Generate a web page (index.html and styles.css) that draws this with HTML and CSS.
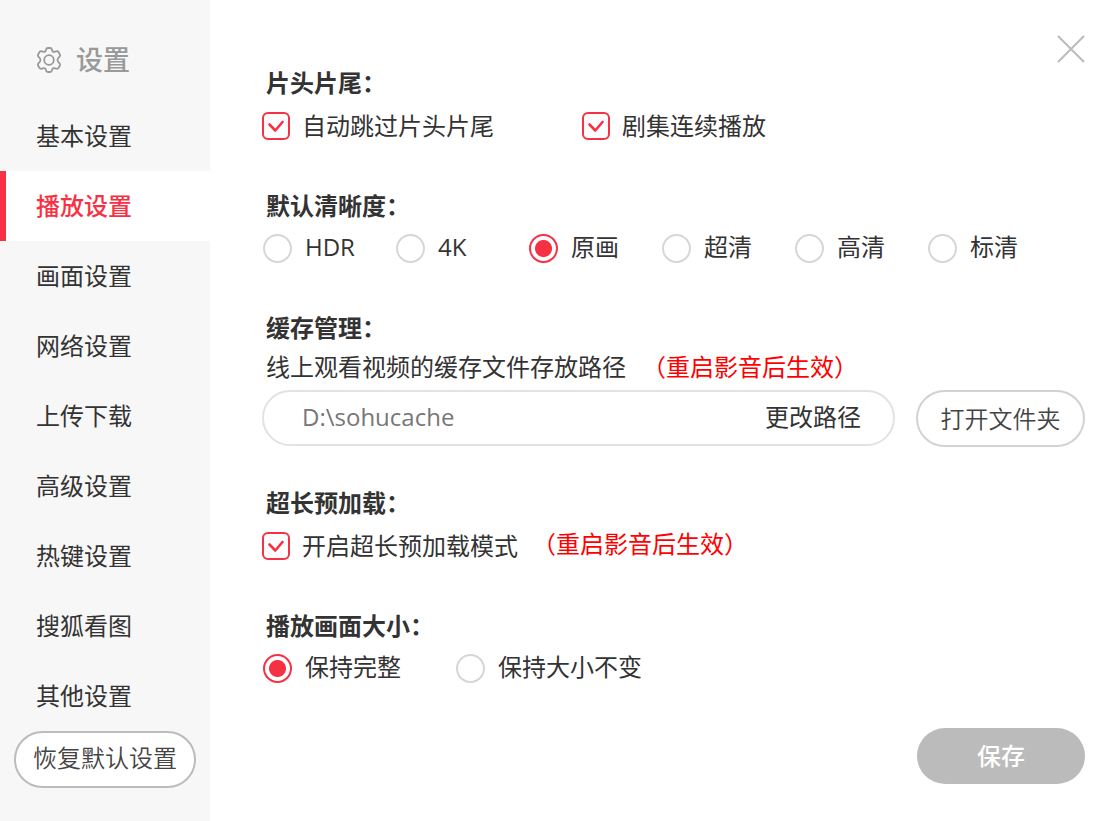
FILE: index.html
```html
<!DOCTYPE html>
<html lang="zh-CN">
<head>
    <meta charset="UTF-8">
    <meta name="viewport" content="width=device-width, initial-scale=1.0">
    <title>设置</title>
    <link rel="stylesheet" href="styles.css">
</head>
<body>
    <aside class="sidebar">
        <h1 class="sidebar-title">
            <svg class="gear" viewBox="0 0 26 26" aria-hidden="true">
                <path d="M10 2.6 Q10.3 1 12 1 H14 Q15.7 1 16 2.6 L16.3 3.9 Q16.8 5.1 18.2 4.8 L20.2 4.3 Q21.8 3.9 22.6 5.2 L23.8 7.2 Q24.6 8.5 23.6 9.6 L22.1 11.2 Q20.8 13 22.1 14.8 L23.6 16.4 Q24.6 17.5 23.8 18.8 L22.6 20.8 Q21.8 22.1 20.2 21.7 L18.2 21.2 Q16.8 20.9 16.3 22.1 L16 23.4 Q15.7 25 14 25 H12 Q10.3 25 10 23.4 L9.7 22.1 Q9.2 20.9 7.8 21.2 L5.8 21.7 Q4.2 22.1 3.4 20.8 L2.2 18.8 Q1.4 17.5 2.4 16.4 L3.9 14.8 Q5.2 13 3.9 11.2 L2.4 9.6 Q1.4 8.5 2.2 7.2 L3.4 5.2 Q4.2 3.9 5.8 4.3 L7.8 4.8 Q9.2 5.1 9.7 3.9 Z"/>
                <circle cx="13" cy="13" r="4.8"/>
            </svg>
            设置
        </h1>
        <nav class="menu">
            <a href="#">基本设置</a>
            <a href="#" class="active" aria-current="page">播放设置</a>
            <a href="#">画面设置</a>
            <a href="#">网络设置</a>
            <a href="#">上传下载</a>
            <a href="#">高级设置</a>
            <a href="#">热键设置</a>
            <a href="#">搜狐看图</a>
            <a href="#">其他设置</a>
        </nav>
        <button type="button" class="btn btn-reset">恢复默认设置</button>
    </aside>

    <main class="content">
        <div class="topbar">
            <button type="button" class="close" aria-label="关闭">
                <svg viewBox="0 0 28 28" aria-hidden="true">
                    <path d="M1 1 L27 27 M27 1 L1 27"/>
                </svg>
            </button>
        </div>

        <form class="settings">
            <section>
                <h2>片头片尾：</h2>
                <div class="options options-check">
                    <label><input type="checkbox" name="skip" checked>自动跳过片头片尾</label>
                    <label><input type="checkbox" name="continuous" checked>剧集连续播放</label>
                </div>
            </section>

            <section>
                <h2>默认清晰度：</h2>
                <div class="options options-radio options-quality">
                    <label><input type="radio" name="quality"><span>HDR</span></label>
                    <label><input type="radio" name="quality"><span>4K</span></label>
                    <label><input type="radio" name="quality" checked><span>原画</span></label>
                    <label><input type="radio" name="quality"><span>超清</span></label>
                    <label><input type="radio" name="quality"><span>高清</span></label>
                    <label><input type="radio" name="quality"><span>标清</span></label>
                </div>
            </section>

            <section>
                <h2>缓存管理：</h2>
                <p class="desc"><label for="cachePath">线上观看视频的缓存文件存放路径</label><span class="note">（重启影音后生效）</span></p>
                <div class="path-row">
                    <div class="path-box">
                        <input type="text" id="cachePath" value="D:\sohucache">
                        <button type="button" class="change">更改路径</button>
                    </div>
                    <button type="button" class="btn btn-open">打开文件夹</button>
                </div>
            </section>

            <section>
                <h2>超长预加载：</h2>
                <div class="options">
                    <label><input type="checkbox" name="preload" checked>开启超长预加载模式</label>
                    <span class="note">（重启影音后生效）</span>
                </div>
            </section>

            <section>
                <h2>播放画面大小：</h2>
                <div class="options options-radio options-size">
                    <label><input type="radio" name="size" checked><span>保持完整</span></label>
                    <label><input type="radio" name="size"><span>保持大小不变</span></label>
                </div>
            </section>

            <button type="submit" class="btn btn-save">保存</button>
        </form>
    </main>
</body>
</html>
```
FILE: styles.css
```css
* {
    box-sizing: border-box;
}
body {
    display: flex;
    min-height: 100vh;
    margin: 0;
    font-family: "Open Sans", "Noto Sans CJK SC", sans-serif;
    font-size: 24px;
    line-height: 36px;
    color: #333;
    background: #fff;
}
h1, h2, p {
    margin: 0;
}
button, input {
    margin: 0;
    font: inherit;
    color: inherit;
}
button {
    padding: 0;
    cursor: pointer;
}

/* sidebar */
.sidebar {
    flex: none;
    width: 210px;
    background: #f7f7f7;
}
.sidebar-title {
    display: flex;
    align-items: center;
    gap: 14px;
    height: 101px;
    padding: 19px 0 0 36px;
    font-size: 27px;
    font-weight: 500;
    color: #999;
}
.gear {
    width: 26px;
    height: 26px;
    fill: none;
    stroke: #999;
    stroke-width: 1.8;
}
.menu a {
    display: block;
    padding: 17px 0 17px 30px;
    border-left: 6px solid transparent;
    color: #333;
    text-decoration: none;
}
.menu .active {
    border-left-color: #f73144;
    background: #fff;
    color: #f73144;
    font-weight: 500;
}

.btn {
    height: 57px;
    border: 2px solid #d2d2d2;
    border-radius: 29px;
    background: #fff;
    color: #444;
}
.btn-reset {
    display: block;
    width: 182px;
    margin: 0 auto;
    padding-bottom: 4px;
    border-color: #bcbcbc;
    font-weight: 350;
}
.btn-open {
    flex: none;
    width: 169px;
    font-weight: 350;
}
.btn-save {
    align-self: flex-end;
    width: 168px;
    height: 56px;
    border: none;
    background: #bbb;
    color: #fff;
    font-weight: 500;
}

.content {
    flex: 1;
    padding: 35px 34px 37px 52px;
}
.topbar {
    display: flex;
    justify-content: flex-end;
    height: 30px;
}
.close {
    width: 28px;
    height: 28px;
    border: none;
    background: none;
}
.close svg {
    display: block;
    fill: none;
    stroke: #bbb;
    stroke-width: 2;
}

.settings {
    display: flex;
    flex-direction: column;
}
.settings section {
    margin-bottom: 37px;
}
.settings section:last-of-type {
    margin-bottom: 35px;
}
h2 {
    padding-left: 4px;
    font-size: 24px;
    font-weight: bold;
}
.options {
    display: flex;
    align-items: center;
    height: 50px;
}
.options label {
    display: flex;
    align-items: center;
    gap: 12px;
}
.options-check,
.options-radio {
    display: grid;
}
.options-check {
    grid-template-columns: 320px auto;
}
.options-radio {
    height: 49px;
}
.options-radio label {
    gap: 13px;
}
.options-radio span {
    padding-bottom: 3px;
}
.options-quality {
    grid-template-columns: repeat(6, 133px);
}
.options-size {
    grid-template-columns: 193px auto;
}

input[type="checkbox"],
input[type="radio"] {
    appearance: none;
    flex: none;
    width: 28px;
    height: 28px;
    border: 2px solid #f73144;
    border-radius: 6px;
}
input[type="checkbox"]:checked {
    background: url("data:image/svg+xml,%3Csvg xmlns='http://www.w3.org/2000/svg' viewBox='0 0 24 24' fill='none' stroke='%23f73144' stroke-width='2.6' stroke-linecap='round' stroke-linejoin='round'%3E%3Cpath d='M5.5 10.5L11.3 16.5L18.5 8'/%3E%3C/svg%3E") center / 24px 24px no-repeat;
}
input[type="radio"] {
    width: 29px;
    height: 29px;
    margin-left: 1px;
    border-color: #d6d6d6;
    border-radius: 50%;
}
input[type="radio"]:checked {
    border-color: #f73144;
    background: radial-gradient(circle, #f73144 8px, #fff 9px);
}

.note {
    color: #f00;
}
.options .note {
    margin-left: 14px;
    padding-bottom: 4px;
}
.desc {
    padding-left: 4px;
    line-height: 42px;
}
.desc .note {
    margin-left: 16px;
}
.path-row {
    display: flex;
    gap: 21px;
    margin: 2px 0 1px;
}
.path-box {
    display: flex;
    align-items: center;
    flex: 1;
    min-width: 0;
    height: 56px;
    padding: 0 32px 2px 38px;
    border: 2px solid #e2e2e2;
    border-radius: 28px;
}
.path-box input {
    flex: 1;
    min-width: 0;
    padding: 0;
    border: none;
    outline: none;
    background: none;
    color: #777;
}
.change {
    flex: none;
    border: none;
    background: none;
}
```
